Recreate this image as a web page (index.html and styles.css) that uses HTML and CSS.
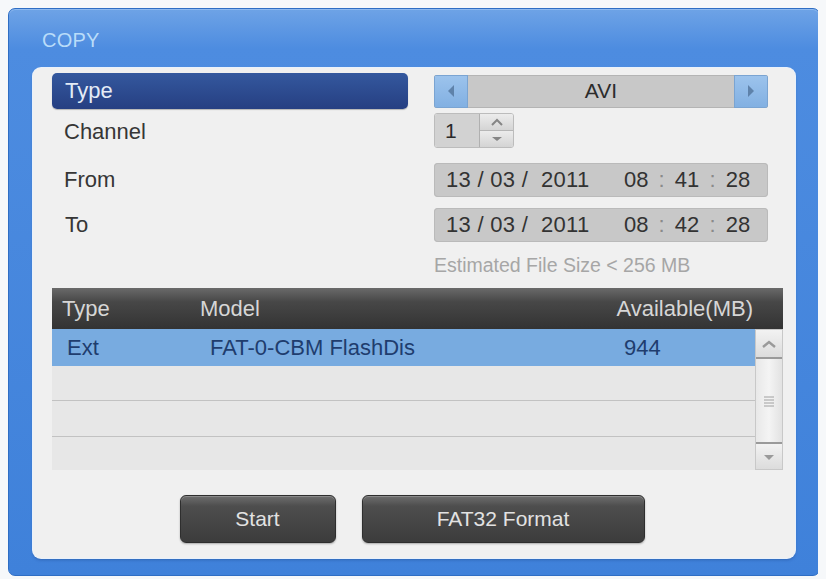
FILE: index.html
```html
<!DOCTYPE html>
<html lang="en">
<head>
<meta charset="utf-8">
<title>Copy</title>
<link rel="stylesheet" href="styles.css">
</head>
<body>
<div class="window">
  <div class="window-title">COPY</div>
  <div class="panel">
    <div class="row row-type">
      <div class="label label-active">Type</div>
      <div class="selector">
        <span class="sel-btn">
          <svg width="10" height="14" viewBox="0 0 10 14"><path d="M8 1 L2 7 L8 13 Z" fill="#56789f" opacity="0.85"/></svg>
        </span>
        <span class="sel-value">AVI</span>
        <span class="sel-btn">
          <svg width="10" height="14" viewBox="0 0 10 14"><path d="M2 1 L8 7 L2 13 Z" fill="#56789f" opacity="0.85"/></svg>
        </span>
      </div>
    </div>
    <div class="row row-channel">
      <div class="label">Channel</div>
      <div class="spinner">
        <span class="spin-value">1</span>
        <span class="spin-btns">
          <span class="spin-half">
            <svg width="14" height="8" viewBox="0 0 14 8"><path d="M2 7 L7 2 L12 7" fill="none" stroke="#858585" stroke-width="2"/></svg>
          </span>
          <span class="spin-half">
            <svg width="14" height="8" viewBox="0 0 14 8"><path d="M2 2 L12 2 L7 6 Z" fill="#858585"/></svg>
          </span>
        </span>
      </div>
    </div>
    <div class="row row-from">
      <div class="label">From</div>
      <div class="datefield">
        <span class="date">13 / 03 /&nbsp; 2011</span>
        <span class="time">08 <i>:</i> 41 <i>:</i> 28</span>
      </div>
    </div>
    <div class="row row-to">
      <div class="label">To</div>
      <div class="datefield">
        <span class="date">13 / 03 /&nbsp; 2011</span>
        <span class="time">08 <i>:</i> 42 <i>:</i> 28</span>
      </div>
    </div>
    <div class="row row-estimate">
      <div class="spacer"></div>
      <div class="estimate">Estimated File Size &lt; 256 MB</div>
    </div>

    <div class="devices">
      <div class="dev-head">
        <span class="c-type">Type</span>
        <span class="c-model">Model</span>
        <span class="c-avail">Available(MB)</span>
      </div>
      <div class="dev-body">
        <div class="dev-rows">
          <div class="dev-row dev-row-selected r1">
            <span class="d-type">Ext</span>
            <span class="d-model">FAT-0-CBM FlashDis</span>
            <span class="d-avail">944</span>
          </div>
          <div class="dev-row r2"></div>
          <div class="dev-row r3"></div>
          <div class="dev-row r4"></div>
        </div>
        <div class="scrollbar">
          <span class="sb-btn sb-up">
            <svg width="16" height="10" viewBox="0 0 16 10"><path d="M2 8 L8 3 L14 8" fill="none" stroke="#9a9a9a" stroke-width="2.4"/></svg>
          </span>
          <span class="sb-thumb">
            <svg width="14" height="14" viewBox="0 0 14 14"><path d="M2 3 H12 M2 6 H12 M2 9 H12 M2 12 H12" stroke="#a0a0a0" stroke-width="1"/></svg>
          </span>
          <span class="sb-btn sb-down">
            <svg width="16" height="10" viewBox="0 0 16 10"><path d="M3 3 L13 3 L8 8 Z" fill="#9a9a9a"/></svg>
          </span>
        </div>
      </div>
    </div>

    <div class="actions">
      <button class="btn btn-start">Start</button>
      <button class="btn btn-format">FAT32 Format</button>
    </div>
  </div>
</div>
</body>
</html>
```
FILE: styles.css
```css
* { box-sizing: border-box; }

body {
  margin: 8px;
  background: #f6f8fa;
  font-family: "Liberation Sans", Arial, sans-serif;
}

/* outer blue window */
.window {
  width: 812px;
  height: 568px;
  border: 1px solid #2f6ec4;
  border-radius: 7px;
  padding: 0 24px 17px 24px;
  background: linear-gradient(#6ea3e6 0px, #4d8ce0 40px, #3f81da 100%);
  box-shadow: inset 0 1px 0 #8fbaf0;
}

.window-title {
  height: 59px;
  padding: 20px 0 0 9px;
  font-size: 20px;
  color: #b9dcf9;
  letter-spacing: 0.2px;
}

/* light inner panel */
.panel {
  width: 762px;
  height: 490px;
  background: #f0f0f0;
  border-radius: 8px;
  padding: 5px 12px 15px 19px;
  box-shadow: 0 0 0 1px #e9f1fb, 0 2px 3px rgba(20, 50, 110, 0.35);
  display: flex;
  flex-direction: column;
}

/* form rows */
.row {
  display: flex;
  align-items: center;
  gap: 26px;
  width: 716px;
}
.row-type { height: 36px; }
.row-channel { height: 35px; margin-top: 4px; }
.row-from { height: 34px; margin-top: 15px; }
.row-to { height: 34px; margin-top: 11px; }
.row-estimate { height: 22px; margin-top: 12px; }

.label {
  width: 356px;
  height: 100%;
  display: flex;
  align-items: center;
  padding-left: 12px;
  font-size: 22px;
  color: #363636;
}
.row-channel .label { padding-top: 3px; }
.row-to .label { padding-left: 13px; }
.label-active {
  background: linear-gradient(#34589e, #263f82);
  border-radius: 5px;
  color: #e4ebf6;
  padding-left: 13px;
  box-shadow: 0 1px 1px rgba(0, 0, 0, 0.25);
}
.spacer { width: 356px; }

/* AVI selector */
.selector {
  width: 334px;
  height: 33px;
  display: flex;
  border-radius: 3px;
  overflow: hidden;
  background: #c8c8c8;
  box-shadow: inset 0 0 0 1px #b4b4b4;
}
.sel-btn {
  width: 34px;
  display: flex;
  align-items: center;
  justify-content: center;
  background: linear-gradient(#9cc3ec, #82b0e2);
  border: 1px solid #7aa4d2;
}
.sel-value {
  flex: 1;
  display: flex;
  align-items: center;
  justify-content: center;
  font-size: 21px;
  color: #2c2c2c;
}

/* channel spinner */
.spinner {
  height: 35px;
  display: flex;
  border-radius: 3px;
  overflow: hidden;
  border: 1px solid #bcbcbc;
}
.spin-value {
  width: 44px;
  display: flex;
  align-items: center;
  padding-left: 10px;
  background: #d2d2d2;
  font-size: 21px;
  color: #2a2a2a;
}
.spin-btns {
  width: 34px;
  display: flex;
  flex-direction: column;
  border-left: 1px solid #b0b0b0;
}
.spin-half {
  flex: 1;
  display: flex;
  align-items: center;
  justify-content: center;
  background: linear-gradient(#ececec, #d4d4d4);
}
.spin-half + .spin-half { border-top: 1px solid #b6b6b6; }

/* date / time fields */
.datefield {
  width: 334px;
  height: 34px;
  display: flex;
  align-items: center;
  padding-left: 12px;
  background: #c8c8c8;
  border-radius: 4px;
  box-shadow: inset 0 0 0 1px #bababa;
  font-size: 22px;
  color: #333;
}
.date { width: 178px; letter-spacing: 0.3px; }
.time { word-spacing: 4px; }
.time i { font-style: normal; color: #8a8a8a; }

.estimate {
  font-size: 19.5px;
  color: #a6a6a6;
}

/* device list */
.devices {
  width: 731px;
  margin-top: 12px;
}
.dev-head {
  height: 41px;
  display: flex;
  align-items: center;
  background: linear-gradient(#6a6a6a 0px, #474747 14px, #333 100%);
  font-size: 22px;
  color: #d6d6d6;
}
.c-type { width: 148px; padding-left: 10px; }
.c-model { flex: 1; }
.c-avail { padding-right: 30px; }

.dev-body { display: flex; }
.dev-rows { flex: 1; }
.dev-row {
  display: flex;
  align-items: center;
  background: #e7e7e7;
  border-bottom: 1px solid #c2c2c2;
  font-size: 22px;
  color: #1f3d6e;
}
.dev-row.r1 { height: 37px; }
.dev-row.r2 { height: 35px; }
.dev-row.r3 { height: 36px; }
.dev-row.r4 { height: 33px; border-bottom: none; }
.dev-row-selected {
  background: #78abe0;
  border-bottom: none;
}
.d-type { width: 158px; padding-left: 15px; }
.d-model { width: 414px; }

.scrollbar {
  width: 28px;
  display: flex;
  flex-direction: column;
  background: #e2e2e2;
  border: 1px solid #c8c8c8;
}
.sb-btn {
  display: flex;
  align-items: center;
  justify-content: center;
  background: linear-gradient(#f2f2f2, #dcdcdc);
}
.sb-up { height: 29px; border-bottom: 2px solid #9a9a9a; }
.sb-down { height: 27px; border-top: 2px solid #9a9a9a; }
.sb-thumb {
  flex: 1;
  display: flex;
  align-items: center;
  justify-content: center;
  background: linear-gradient(90deg, #e8e8e8, #f4f4f4 50%, #e2e2e2);
}

/* action buttons */
.actions {
  display: flex;
  justify-content: center;
  gap: 26px;
  margin-top: 25px;
  padding-right: 11px;
}
.btn {
  height: 48px;
  border: 1px solid #2e2e2e;
  border-radius: 6px;
  background: linear-gradient(#6e6e6e 0px, #4e4e4e 10px, #3c3c3c 100%);
  box-shadow: inset 0 1px 0 #8a8a8a, 0 1px 2px rgba(0, 0, 0, 0.3);
  color: #e2e2e2;
  font-family: "Liberation Sans", Arial, sans-serif;
  font-size: 21px;
}
.btn-start { width: 156px; }
.btn-format { width: 283px; }
```
